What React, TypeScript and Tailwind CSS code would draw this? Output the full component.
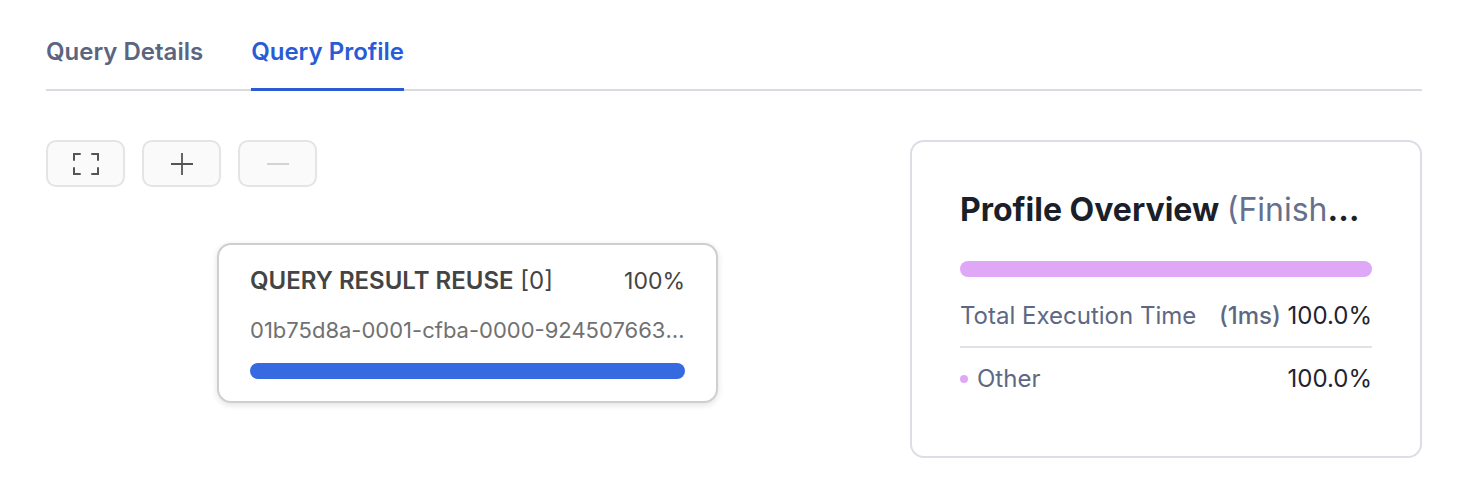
const font = { fontFamily: 'Inter, "Noto Sans", sans-serif' };

function Tabs() {
  return (
    <div className="flex gap-12 border-b-2 border-[#d9dbe3]">
      <div className="-mb-[2px] border-b-[3px] border-transparent pb-[22px] pt-[38px] text-[24px] font-semibold leading-[28px] text-[#5b6580]">
        Query Details
      </div>
      <div className="-mb-[2px] border-b-[3px] border-[#2a5bd7] pb-[22px] pt-[38px] text-[24px] font-semibold leading-[28px] text-[#2a5bd7]">
        Query Profile
      </div>
    </div>
  );
}

function ToolButton({ children }: { children: React.ReactNode }) {
  return (
    <button className="flex h-[47px] w-[79px] items-center justify-center rounded-[10px] border-2 border-[#e4e4e4] bg-[#fafafa]">
      {children}
    </button>
  );
}

// fit-to-screen corners
function FitIcon() {
  return (
    <svg width="26" height="24" viewBox="0 0 26 24" fill="none" stroke="#555" strokeWidth="2" strokeLinecap="round">
      <path d="M1 8V2h6M19 2h6v6M25 16v6h-6M7 22H1v-6" />
    </svg>
  );
}

function PlusIcon() {
  return (
    <svg width="24" height="24" viewBox="0 0 24 24" fill="none" stroke="#555" strokeWidth="1.8">
      <path d="M12 1v22M1 12h22" />
    </svg>
  );
}

function MinusIcon() {
  return (
    <svg width="24" height="24" viewBox="0 0 24 24" fill="none" stroke="#cfcfcf" strokeWidth="1.8">
      <path d="M1 12h22" />
    </svg>
  );
}

function QueryNode() {
  return (
    <div className="w-[501px] rounded-[14px] border-2 border-[#cfcfcf] bg-white px-[31px] pb-[22px] pt-[21px] shadow-[0_2px_6px_rgba(0,0,0,0.12)]">
      <div className="flex items-center justify-between leading-[30px] text-[#444]">
        <span className="text-[24px]">
          <span className="font-semibold">QUERY RESULT REUSE</span> <span>[0]</span>
        </span>
        <span className="text-[23px]">100%</span>
      </div>
      <div className="mt-[20px] truncate text-[22px] leading-[28px] text-[#717171]">
        01b75d8a-0001-cfba-0000-924507663000f
      </div>
      <div className="mt-[19px] h-[16px] rounded-full bg-[#356ae0]" />
    </div>
  );
}

function ProfileOverview() {
  return (
    <div className="h-[318px] w-[512px] rounded-[14px] border-2 border-[#dcdee6] bg-white px-[48px] pt-[48px]">
      <div className="truncate text-[32px] font-bold leading-[40px] text-[#1b1f2a]">
        <span>Profile Overview</span>{' '}
        <span className="font-normal text-[#66708c]">(Finished in 1ms)</span>
      </div>
      <div className="mt-[31px] h-[16px] rounded-full bg-[#dfa8f6]" />
      <div className="mt-[24px] flex items-center justify-between pb-[15px] text-[24px] leading-[30px]">
        <span className="text-[#5d6883]">Total Execution Time</span>
        <span>
          <span className="font-medium text-[#5d6883]">(1ms)</span> <span className="text-[#1f2330]">100.0%</span>
        </span>
      </div>
      <div className="h-[2px] bg-[#e0e2e8]" />
      <div className="mt-[16px] flex items-center justify-between text-[24px] leading-[30px]">
        <span className="flex items-center gap-[9px] text-[#5d6883]">
          <span className="h-[8px] w-[8px] rounded-full bg-[#dfa8f6]" />
          Other
        </span>
        <span className="text-[#1f2330]">100.0%</span>
      </div>
    </div>
  );
}

export default function App() {
  return (
    <div className="min-h-[480px] bg-white pl-[46px] pr-[50px]" style={font}>
      <Tabs />
      <div className="mt-[49px] flex items-start justify-between">
        <div>
          <div className="flex gap-[17px]">
            <ToolButton>
              <FitIcon />
            </ToolButton>
            <ToolButton>
              <PlusIcon />
            </ToolButton>
            <ToolButton>
              <MinusIcon />
            </ToolButton>
          </div>
          <div className="ml-[171px] mt-[56px]">
            <QueryNode />
          </div>
        </div>
        <ProfileOverview />
      </div>
    </div>
  );
}
